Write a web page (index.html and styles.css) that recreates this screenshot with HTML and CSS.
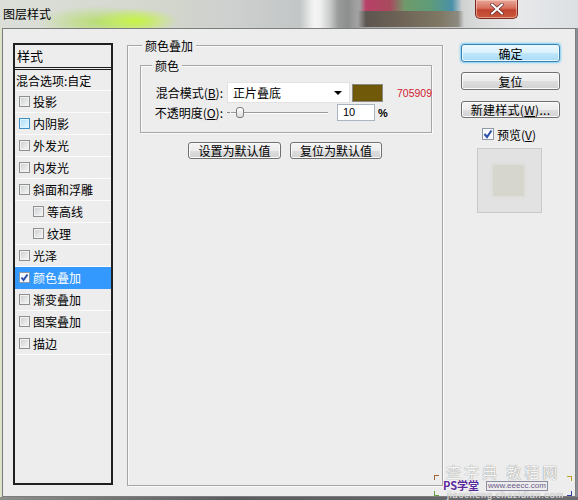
FILE: index.html
```html
<!DOCTYPE html>
<html>
<head>
<meta charset="utf-8">
<link rel="stylesheet" href="styles.css">
</head>
<body>
<div class="window">
  <div class="titlebar">
    <span class="title">图层样式</span>
    <div class="close">
      <svg width="16" height="12" viewBox="0 0 16 12"><path d="M3 1.5 L13 10.5 M13 1.5 L3 10.5" stroke="#5a2020" stroke-width="3.4" stroke-linecap="round"/><path d="M3 1.5 L13 10.5 M13 1.5 L3 10.5" stroke="#ffffff" stroke-width="2.2" stroke-linecap="round"/></svg>
    </div>
  </div>
  <div class="dialog">
    <div class="list">
      <div class="list-head">样式</div>
      <div class="row blend">混合选项:自定</div>
      <div class="row"><span class="cb"></span>投影</div>
      <div class="row"><span class="cb hover"></span>内阴影</div>
      <div class="row"><span class="cb"></span>外发光</div>
      <div class="row"><span class="cb"></span>内发光</div>
      <div class="row"><span class="cb"></span>斜面和浮雕</div>
      <div class="row sub"><span class="cb"></span>等高线</div>
      <div class="row sub"><span class="cb"></span>纹理</div>
      <div class="row"><span class="cb"></span>光泽</div>
      <div class="row active"><span class="cb checked"><svg width="9" height="9" viewBox="0 0 9 9"><path d="M1.5 4.5 L3.5 7 L7.5 1.5" fill="none" stroke="#2a4fa8" stroke-width="2"/></svg></span>颜色叠加</div>
      <div class="row"><span class="cb"></span>渐变叠加</div>
      <div class="row"><span class="cb"></span>图案叠加</div>
      <div class="row"><span class="cb"></span>描边</div>
    </div>

    <div class="group outer">
      <div class="legend">颜色叠加</div>
      <div class="group inner">
        <div class="legend">颜色</div>
        <div class="field first">
          <span class="label">混合模式(<u>B</u>):</span>
          <div class="select"><span>正片叠底</span><span class="arrow"></span></div>
          <span class="swatch"></span>
          <span class="hex">705909</span>
        </div>
        <div class="field second">
          <span class="label">不透明度(<u>O</u>):</span>
          <div class="slider"><span class="tick"></span><span class="track short"></span><span class="thumb"></span><span class="track"></span></div>
          <span class="input">10</span>
          <span class="pct">%</span>
        </div>
      </div>
      <div class="defaults">
        <span class="btn w1">设置为默认值</span>
        <span class="btn w2">复位为默认值</span>
      </div>
    </div>

    <div class="side">
      <span class="btn primary">确定</span>
      <span class="btn reset">复位</span>
      <span class="btn newstyle">新建样式(<u>W</u>)...</span>
      <div class="preview-check"><span class="cb checked big"><svg width="10" height="10" viewBox="0 0 10 10"><path d="M1.5 5 L4 8 L8.5 1.5" fill="none" stroke="#2a4fa8" stroke-width="2"/></svg></span>预览(<u>V</u>)</div>
      <div class="preview"><div class="preview-inner"></div></div>
    </div>
  </div>
  <div class="bottom-frame"></div>

  <div class="watermark">
    <span class="wm-big">查字典 教程网</span>
    <span class="wm-ps">PS学堂</span>
    <span class="wm-url">www.eeecc.com</span>
    <span class="wm-small">jiaocheng.chazidian.com</span>
    <span class="corner c1"></span>
    <span class="corner c2"></span>
    <span class="corner c3"></span>
    <span class="corner c4"></span>
  </div>
</div>
</body>
</html>
```

FILE: styles.css
```css
* { box-sizing: border-box; }

body {
  margin: 0;
  width: 578px;
  height: 500px;
  overflow: hidden;
  font-family: "Noto Sans CJK SC", "Liberation Sans", sans-serif;
  font-size: 12px;
  color: #000;
  background: #d6d9d3;
}

.window {
  position: relative;
  width: 578px;
  height: 500px;
  display: flex;
  flex-direction: column;
  background: linear-gradient(to right, #dfe7c9 0, #d8dfc6 2px, #cfd2cf 4px, #cfd2cf 574px, #8e969c 576px, #7c858c 578px);
}

.titlebar {
  height: 28px;
  flex: none;
  display: flex;
  align-items: flex-start;
  justify-content: space-between;
  padding-left: 3px;
  background:
    radial-gradient(ellipse 42px 13px at 136px 21px, rgba(198, 246, 66, 0.95), rgba(198, 246, 66, 0) 100%),
    radial-gradient(ellipse 62px 16px at 100px 22px, rgba(178, 222, 96, 0.85), rgba(178, 222, 96, 0) 100%),
    linear-gradient(to right, rgba(0,0,0,0) 360px, #b84068 366px, #a84a5e 390px, #6f9a6c 405px, #5f9c78 430px, #4a90a8 452px, rgba(0,0,0,0) 462px) 0 0 / 100% 11px no-repeat,
    linear-gradient(to right, rgba(0,0,0,0) 358px, #5d5650 366px, #6e6356 400px, #7f7864 440px, #8c8a80 458px, rgba(0,0,0,0) 464px) 0 11px / 100% 16px no-repeat,
    linear-gradient(to right, #dcdfd9 0, #d9ddd5 50px, #d2d6cc 170px, #cdcfcf 240px, #c3c6c6 300px, #f4f4f4 314px, #f0f0f0 320px, #c9cbcb 330px, #9a9c9c 338px, #8d8f8f 348px, #a0a0a0 356px, #cfd1d1 462px, #d8dada 474px, #e6e8ea 520px, #dde0e3 578px);
}

.title {
  line-height: 28px;
  font-size: 12px;
  color: #000;
}

.close {
  width: 43px;
  height: 19px;
  margin-right: 60px;
  border: 1px solid #7a2a22;
  border-top: none;
  border-radius: 0 0 5px 5px;
  background: linear-gradient(#e7a89a 0, #d8705e 45%, #c1432f 55%, #c85a3c 100%);
  box-shadow: inset 0 0 0 1px rgba(255, 210, 200, 0.55);
  display: flex;
  align-items: center;
  justify-content: center;
}

.dialog {
  flex: none;
  height: 469px;
  margin: 0 2px;
  border: 1px solid #7d7d7d;
  background: #ededed;
  display: flex;
  align-items: flex-start;
  padding-left: 10px;
}

/* ---------- style list ---------- */
.list {
  width: 100px;
  height: 442px;
  margin-top: 14px;
  border: 2px solid #202020;
  background: #ededed;
  flex: none;
}

.list-head {
  height: 25px;
  line-height: 22px;
  padding-left: 2px;
  font-size: 13px;
  border-bottom: 3px double #1c1c1c;
}

.row {
  height: 22px;
  display: flex;
  align-items: center;
  border-bottom: 1px solid #fbfbfb;
  white-space: nowrap;
}

.row.blend {
  height: 21px;
  padding-left: 1px;
}

.cb {
  flex: none;
  width: 11px;
  height: 11px;
  margin: 0 3px 0 4px;
  border: 1px solid #8e9090;
  background: linear-gradient(135deg, #c9ccd0 0, #e6e7e8 60%, #f7f7f7 100%);
  box-shadow: inset 0 0 0 1px #f2f2f2;
  display: flex;
  align-items: center;
  justify-content: center;
}

.row.sub .cb { margin-left: 18px; }

.cb.hover {
  border-color: #3f8fc5;
  background: linear-gradient(135deg, #a9dbf6 0, #cfeefd 60%, #e7f7fe 100%);
  box-shadow: inset 0 0 0 1px #dff3fc;
}

.cb.checked {
  background: #f6f8fb;
  border-color: #8e9aa8;
  box-shadow: none;
}

.row.active {
  background: #3399ff;
  color: #fff;
  border-bottom-color: #3399ff;
}

/* ---------- group boxes ---------- */
.group {
  border: 1px solid #a6a6a6;
  box-shadow: inset 1px 1px 0 #fafafa, 1px 1px 0 #fafafa;
}

.group.outer {
  flex: none;
  width: 316px;
  height: 441px;
  margin-top: 16px;
  margin-left: 14px;
}

.legend {
  display: block;
  width: fit-content;
  height: 16px;
  line-height: 16px;
  padding: 0 3px;
  background: #ededed;
}

.outer > .legend { margin: -8px 0 0 14px; }

.group.inner {
  margin: 11px 10px 0 12px;
  padding-bottom: 11px;
}

.inner > .legend { margin: -8px 0 0 11px; }

.field {
  display: flex;
  align-items: center;
  white-space: nowrap;
}

.field.first { margin-top: 8px; height: 21px; }
.field.second { margin-top: 1px; height: 17px; }

.label {
  width: 82px;
  text-align: right;
  flex: none;
}

.select {
  flex: none;
  width: 123px;
  height: 21px;
  margin-left: 4px;
  background: #fff;
  border: 1px solid #e2e2e2;
  display: flex;
  align-items: center;
  justify-content: space-between;
  padding: 0 7px 0 5px;
  font-size: 12px;
}

.arrow {
  width: 0;
  height: 0;
  border-left: 4px solid transparent;
  border-right: 4px solid transparent;
  border-top: 4px solid #000;
}

.swatch {
  flex: none;
  width: 31px;
  height: 18px;
  margin-left: 2px;
  background: #705909;
  border: 1px solid #8a8a80;
  box-shadow: inset 0 0 0 1px #6a5508;
}

.hex {
  margin-left: 14px;
  font-family: "Liberation Sans", sans-serif;
  font-size: 10.5px;
  color: #d3202f;
}

.slider {
  flex: none;
  width: 101px;
  height: 14px;
  margin-left: 4px;
  display: flex;
  align-items: center;
}

.tick {
  width: 3px;
  height: 1px;
  background: #8a8a8a;
  margin-right: 1px;
}

.track {
  flex: 1;
  height: 2px;
  background: linear-gradient(#9a9a9a 50%, #ffffff 50%);
}

.track.short { flex: none; width: 5px; }

.thumb {
  flex: none;
  width: 8px;
  height: 11px;
  border: 1px solid #7c7c7c;
  border-radius: 3px;
  background: linear-gradient(#ffffff, #dcdcdc);
}

.input {
  flex: none;
  width: 38px;
  height: 17px;
  margin-left: 9px;
  padding-left: 5px;
  line-height: 15px;
  background: #fff;
  border: 1px solid #a9b5c2;
  font-family: "Liberation Sans", sans-serif;
  font-size: 11px;
}

.pct {
  margin-left: 3px;
  font-family: "Liberation Sans", sans-serif;
  font-weight: bold;
  font-size: 11px;
}

.defaults {
  display: flex;
  justify-content: center;
  gap: 9px;
  margin-top: 9px;
}

.btn {
  display: flex;
  align-items: center;
  justify-content: center;
  height: 17px;
  border: 1px solid #707070;
  border-radius: 3px;
  background: linear-gradient(#f4f4f4 0, #ececec 50%, #dedede 51%, #d2d2d2 100%);
  box-shadow: inset 0 0 0 1px #fbfbfb;
  white-space: nowrap;
  font-size: 12px;
  line-height: 15px;
}

.btn.w1 { width: 93px; }
.btn.w2 { width: 92px; }

/* ---------- right column ---------- */
.side {
  flex: none;
  width: 99px;
  margin-left: 18px;
  margin-top: 15px;
  display: flex;
  flex-direction: column;
}

.btn.primary {
  height: 18px;
  border-color: #3c7fb1;
  background: linear-gradient(#ecf8fe 0, #d9f1fd 50%, #bfe7fc 51%, #a8dbf6 100%);
  box-shadow: 0 0 2px 1px #7dd0f5, inset 0 0 0 1px #e9f7fe;
}

.btn.reset { height: 18px; margin-top: 10px; }
.btn.newstyle { height: 17px; margin-top: 11px; letter-spacing: 0.3px; }

.preview-check {
  display: flex;
  align-items: center;
  justify-content: center;
  height: 14px;
  margin-top: 9px;
  padding-right: 3px;
}

.cb.big {
  width: 12px;
  height: 12px;
  margin: 0 3px 0 0;
}

.preview {
  width: 65px;
  height: 65px;
  margin: 7px 0 0 16px;
  border: 1px solid #c9c9c9;
  background: #e2e2e2;
  display: flex;
  align-items: center;
  justify-content: center;
  padding-right: 2px;
}

.preview-inner {
  width: 31px;
  height: 31px;
  background: #d6d6cf;
  box-shadow: 0 0 3px 1px #dadad4;
}

.bottom-frame {
  flex: none;
  height: 3px;
  background: linear-gradient(to right, #8d8f8d, #5a5c5e 40%, #6a6c70 100%);
}

/* ---------- watermark overlay ---------- */
.watermark {
  position: absolute;
  left: 432px;
  top: 464px;
  width: 146px;
  height: 36px;
  pointer-events: none;
}

.wm-big {
  position: absolute;
  left: 14px;
  top: 0;
  font-size: 15px;
  line-height: 16px;
  letter-spacing: 3px;
  color: #f4f4f4;
  text-shadow: 0 0 1px #9a9a9a, 0 0 1px #9a9a9a;
  white-space: nowrap;
}

.wm-ps {
  position: absolute;
  left: 11px;
  top: 16px;
  font-size: 11px;
  line-height: 11px;
  font-weight: bold;
  color: #5a2a9a;
  text-shadow: 0 0 2px #fff, 0 0 1px #fff;
  white-space: nowrap;
}

.wm-url {
  position: absolute;
  left: 54px;
  top: 17px;
  font-family: "Liberation Sans", sans-serif;
  font-size: 8px;
  color: #6b5a8a;
  border: 1px solid #8a8aa0;
  padding: 0 1px;
  line-height: 8px;
  white-space: nowrap;
}

.wm-small {
  position: absolute;
  left: 15px;
  top: 27px;
  font-family: "Liberation Sans", sans-serif;
  font-size: 9px;
  line-height: 9px;
  color: #e8e8ea;
  text-shadow: 0 0 1px #8a8a8a;
  white-space: nowrap;
  letter-spacing: 0.8px;
}

.corner {
  position: absolute;
  width: 5px;
  height: 5px;
  border: 1px solid;
}

.c1 { left: 2px; top: 11px; border-color: #a06030; border-right: none; border-bottom: none; }
.c2 { left: 135px; top: 12px; border-color: #c0a020; border-left: none; border-bottom: none; }
.c3 { left: 2px; top: 27px; border-color: #60a040; border-right: none; border-top: none; }
.c4 { left: 135px; top: 27px; border-color: #3040a0; border-left: none; border-top: none; }
```
